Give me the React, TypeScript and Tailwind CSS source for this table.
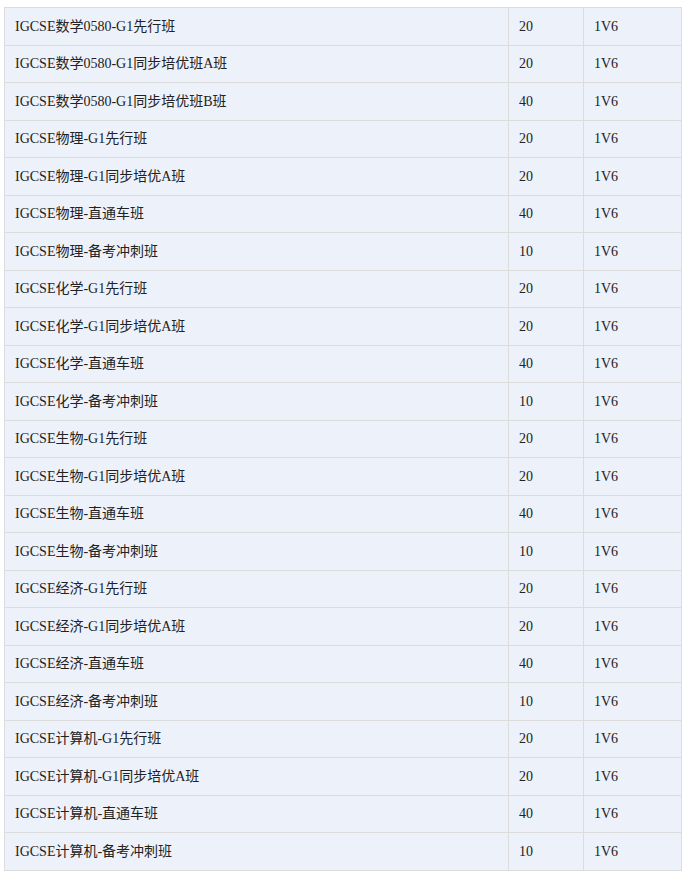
import React from "react";

const rows: [string, string, string][] = [
  ["IGCSE数学0580-G1先行班", "20", "1V6"],
  ["IGCSE数学0580-G1同步培优班A班", "20", "1V6"],
  ["IGCSE数学0580-G1同步培优班B班", "40", "1V6"],
  ["IGCSE物理-G1先行班", "20", "1V6"],
  ["IGCSE物理-G1同步培优A班", "20", "1V6"],
  ["IGCSE物理-直通车班", "40", "1V6"],
  ["IGCSE物理-备考冲刺班", "10", "1V6"],
  ["IGCSE化学-G1先行班", "20", "1V6"],
  ["IGCSE化学-G1同步培优A班", "20", "1V6"],
  ["IGCSE化学-直通车班", "40", "1V6"],
  ["IGCSE化学-备考冲刺班", "10", "1V6"],
  ["IGCSE生物-G1先行班", "20", "1V6"],
  ["IGCSE生物-G1同步培优A班", "20", "1V6"],
  ["IGCSE生物-直通车班", "40", "1V6"],
  ["IGCSE生物-备考冲刺班", "10", "1V6"],
  ["IGCSE经济-G1先行班", "20", "1V6"],
  ["IGCSE经济-G1同步培优A班", "20", "1V6"],
  ["IGCSE经济-直通车班", "40", "1V6"],
  ["IGCSE经济-备考冲刺班", "10", "1V6"],
  ["IGCSE计算机-G1先行班", "20", "1V6"],
  ["IGCSE计算机-G1同步培优A班", "20", "1V6"],
  ["IGCSE计算机-直通车班", "40", "1V6"],
  ["IGCSE计算机-备考冲刺班", "10", "1V6"],
];

export default function App() {
  return (
    <div
      className="pt-[7px] pl-[4px] bg-white min-h-[876px] text-[14px] text-[#222222]"
      style={{ fontFamily: '"Liberation Serif", "Noto Sans CJK SC", serif' }}
    >
      <table className="border-collapse w-[677px] table-fixed bg-[#edf1f9]">
        <colgroup>
          <col className="w-[504px]" />
          <col className="w-[75px]" />
          <col className="w-[98px]" />
        </colgroup>
        <tbody>
          {rows.map((r, i) => (
            <tr key={i} className="h-[37.5px]">
              <td className="border border-[#dcdcdc] px-[10px] pt-[1px] pb-0 leading-[20px] align-middle">{r[0]}</td>
              <td className="border border-[#dcdcdc] px-[10px] pt-[1px] pb-0 leading-[20px] align-middle">{r[1]}</td>
              <td className="border border-[#dcdcdc] px-[10px] pt-[1px] pb-0 leading-[20px] align-middle">{r[2]}</td>
            </tr>
          ))}
        </tbody>
      </table>
    </div>
  );
}
